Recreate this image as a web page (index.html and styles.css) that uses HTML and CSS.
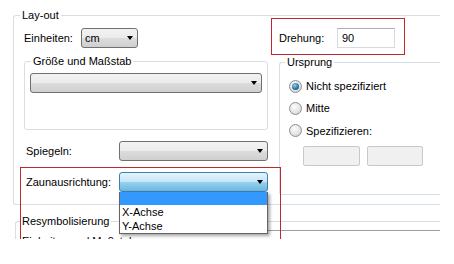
FILE: index.html
```html
<!DOCTYPE html>
<html lang="de">
<head>
  <meta charset="UTF-8">
  <title>Lay-out</title>
  <link rel="stylesheet" href="styles.css">
</head>
<body>
<div class="page">
  <div class="panel">
    <fieldset class="group layout">
      <legend>Lay-out</legend>
      <div class="layout-cols">
        <div class="col-left">
          <div class="row row-units">
            <span class="lbl lbl-units">Einheiten:</span>
            <div class="combo combo-units"><span class="val">cm</span><span class="arrow"></span></div>
          </div>
          <fieldset class="group scale">
            <legend>Größe und Maßstab</legend>
            <div class="combo combo-scale"><span class="arrow"></span></div>
          </fieldset>
          <div class="row row-field">
            <span class="lbl lbl-field">Spiegeln:</span>
            <div class="combo combo-wide"><span class="arrow"></span></div>
          </div>
          <div class="row row-field">
            <span class="lbl lbl-field">Zaunausrichtung:</span>
            <div class="combo combo-wide open"><span class="arrow"></span>
              <!-- aufgeklappte Liste -->
              <ul class="droplist">
                <li class="sel">&nbsp;</li>
                <li>X-Achse</li>
                <li>Y-Achse</li>
              </ul>
            </div>
          </div>
        </div>
        <div class="col-right">
          <div class="rotation">
            <span class="lbl lbl-rot">Drehung:</span>
            <div class="textbox">90</div>
          </div>
          <fieldset class="group origin">
            <legend>Ursprung</legend>
            <div class="radio-row first"><span class="radio checked"></span>Nicht spezifiziert</div>
            <div class="radio-row"><span class="radio"></span>Mitte</div>
            <div class="radio-row last"><span class="radio"></span>Spezifizieren:</div>
            <div class="coords">
              <span class="textbox off x"></span>
              <span class="textbox off y"></span>
            </div>
          </fieldset>
        </div>
      </div>
    </fieldset>
    <fieldset class="group resym">
      <legend>Resymbolisierung</legend>
      <div class="sep"></div>
      <div class="cut">Einheiten und Maßstab</div>
    </fieldset>
  </div>
  <div class="mark-fence"></div>
</div>
</body>
</html>
```

FILE: styles.css
```css
* {
  box-sizing: border-box;
}

body {
  margin: 0;
  font-size: 11px;
  font-family: "Liberation Sans", Arial, sans-serif;
  color: #000;
  background-color: #fff;
}

.page {
  position: relative;
}

.panel {
  height: 239px;
  overflow: hidden;
  padding: 8px 0 0 13px;
}

/* Gruppenrahmen */
.group {
  margin: 0;
  padding: 0;
  min-width: 0;
  border: 1px solid #d5dfe5;
  border-radius: 3px;
}

.group legend {
  padding: 0 2px;
  line-height: 14px;
}

.layout {
  width: 427px;
  padding-bottom: 9px;
  border-right: 0;
  border-radius: 3px 0 0 3px;
}

.layout > legend {
  margin-left: 6px;
}

.layout-cols {
  display: grid;
  grid-template-columns: 256px 1fr;
  align-items: start;
}

.row {
  display: flex;
  align-items: center;
  height: 20px;
}

.row-units {
  margin-top: 6px;
  padding-left: 10px;
}

.lbl-units {
  width: 57px;
}

.row-field {
  margin-top: 11px;
  padding-left: 12px;
}

.lbl-field {
  width: 93px;
}

.scale {
  width: 244px;
  margin: 6px 0 0 10px;
  padding: 0 0 36px 5px;
}

.scale legend {
  margin-left: 1px;
}

/* Kombinationsfeld */
.combo {
  position: relative;
  display: flex;
  align-items: center;
  height: 20px;
  padding: 0 4px 0 3px;
  border: 1px solid #707070;
  border-radius: 3px;
  background: linear-gradient(#f2f2f2, #ebebeb 50%, #dddddd 50%, #cfcfcf);
}

.combo .arrow {
  margin-left: auto;
  width: 0;
  height: 0;
  border-top: 4px solid #000;
  border-left: 3.5px solid transparent;
  border-right: 3.5px solid transparent;
}

.combo-units {
  width: 57px;
}

.combo-scale {
  width: 232px;
  margin-top: 5px;
}

.combo-wide {
  width: 149px;
}

.combo.open {
  border-color: #3c7fb1;
  background: linear-gradient(#e5f4fc, #c4e5f6 50%, #98d1ef 52%, #6cb5de);
}

.droplist {
  position: absolute;
  z-index: 5;
  left: -1px;
  top: 19px;
  width: 149px;
  margin: 0;
  padding: 0;
  list-style: none;
  background-color: #fff;
  border: 1px solid #646464;
  border-top: 0;
  box-shadow: 2px 2px 3px rgba(0, 0, 0, 0.35);
}

.droplist li {
  height: 14px;
  line-height: 14px;
  padding-left: 2px;
}

.droplist li.sel {
  height: 13px;
  background-color: #3399ff;
}

/* rechte Spalte */
.rotation {
  display: flex;
  align-items: center;
  width: 134px;
  margin: -4px 0 0 1px;
  padding: 9px 0 6px 7px;
  border: 1px solid #c0282d;
}

.lbl-rot {
  width: 58px;
}

.textbox {
  width: 58px;
  height: 20px;
  line-height: 18px;
  padding-left: 4px;
  border: 1px solid #d6dbe0;
  border-top-color: #abadb3;
  background-color: #fff;
}

.origin {
  width: 161px;
  margin-left: 9px;
  padding-bottom: 28px;
  border-right: 0;
  border-radius: 3px 0 0 3px;
}

.origin legend {
  margin-left: 5px;
}

.radio-row {
  display: flex;
  align-items: center;
  height: 22px;
  padding-left: 9px;
}

.radio-row.first {
  margin-top: 6px;
}

.radio-row.last {
  height: 23px;
}

.radio {
  position: relative;
  width: 13px;
  height: 13px;
  margin-right: 4px;
  border: 1px solid #8e8f8f;
  border-radius: 50%;
  background: radial-gradient(circle at 40% 35%, #fdfdfd, #e2e2e2 60%, #c9c9c9);
}

.radio.checked::after {
  content: "";
  position: absolute;
  top: 2px;
  left: 2px;
  width: 7px;
  height: 7px;
  border-radius: 50%;
  background: radial-gradient(circle at 40% 35%, #8fd0f2, #2a6d9c 60%, #1b4f78);
}

.coords {
  display: flex;
  gap: 7px;
  margin-top: 4px;
  padding-left: 23px;
}

.textbox.off {
  height: 20px;
  border: 1px solid #c9c9c9;
  border-radius: 2px;
  background-color: #f0f0f0;
}

.textbox.x {
  width: 57px;
}

.textbox.y {
  width: 56px;
}

/* Resymbolisierung */
.resym {
  width: 425px;
  margin: 9px 0 0 2px;
  border-right: 0;
  border-bottom: 0;
  border-radius: 3px 0 0 0;
}

.resym legend {
  margin-left: 4px;
}

.sep {
  margin: 2px 0 0 110px;
  border-top: 1px solid #a0a0a0;
}

.cut {
  padding: 3px 0 0 6px;
  line-height: 14px;
}

/* rote Markierung */
.mark-fence {
  position: absolute;
  left: 20px;
  top: 167px;
  width: 261px;
  height: 77px;
  border: 1px solid #c0282d;
}
```
